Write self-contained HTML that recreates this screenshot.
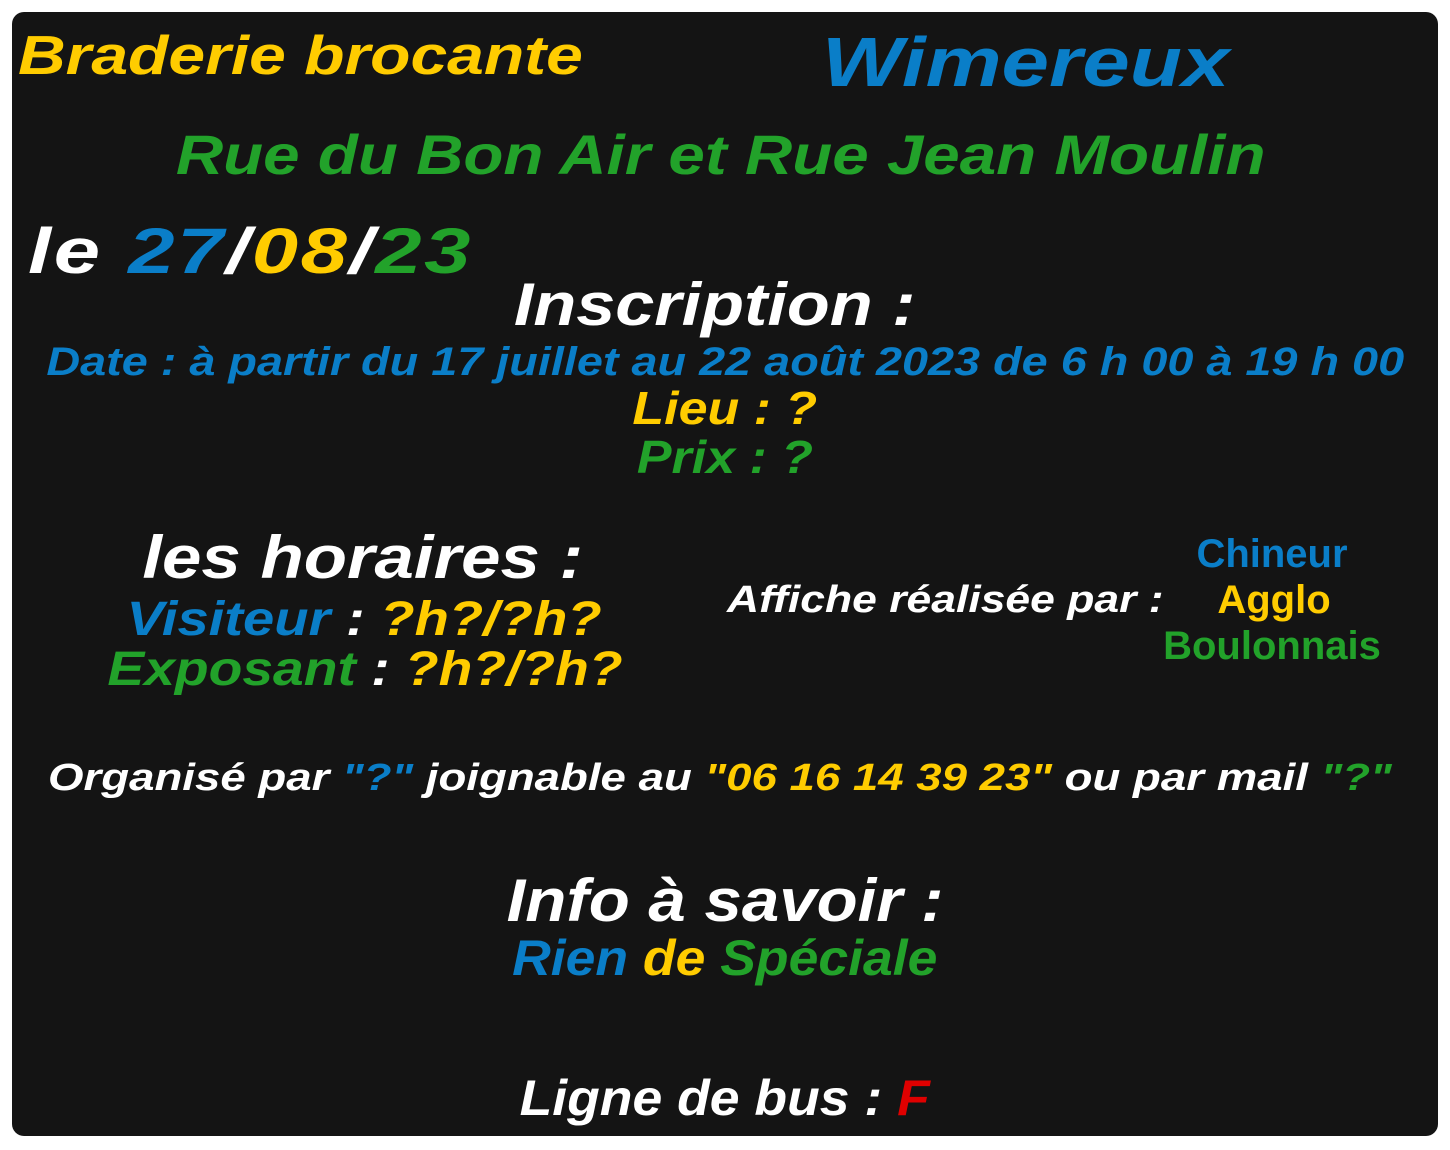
<!DOCTYPE html>
<html><head><meta charset="utf-8"><style>
html,body{margin:0;padding:0;background:#fff;width:1450px;height:1150px;overflow:hidden}
#b{position:absolute;left:12px;top:12px;width:1426px;height:1124px;background:#141414;border-radius:12px}
.t{position:absolute;white-space:nowrap;line-height:1;font-family:"Liberation Sans",sans-serif;font-weight:bold;font-style:italic;color:#fff}
.t>span.s{display:inline-block}
.c{left:0;width:1450px;text-align:center}
.y{color:#ffcc00}.bl{color:#0a7ec8}.g{color:#22a22a}.w{color:#fff}.r{color:#e00000}
.n{font-style:normal}
</style></head><body>
<div id="b"></div>
<div class="t y" style="left:18px;top:28px;font-size:55px"><span class="s" style="transform:scaleX(1.2);transform-origin:0 0">Braderie brocante</span></div>
<div class="t bl" style="left:822px;top:27px;font-size:70px"><span class="s" style="transform:scaleX(1.22);transform-origin:0 0">Wimereux</span></div>
<div class="t c g" style="top:127px;font-size:56px;left:-4px"><span class="s" style="transform:scaleX(1.17)">Rue du Bon Air et Rue Jean Moulin</span></div>
<div class="t" style="left:28px;top:219px;font-size:64px"><span class="s" style="transform:scaleX(1.3);transform-origin:0 0;letter-spacing:2px">le <span class="bl">27</span>/<span class="y">08</span>/<span class="g">23</span></span></div>
<div class="t c" style="top:275px;font-size:60px;left:-10px"><span class="s" style="transform:scaleX(1.17)">Inscription :</span></div>
<div class="t c bl" style="top:342px;font-size:40px;left:0"><span class="s" style="transform:scaleX(1.17)">Date : à partir du 17 juillet au 22 août 2023 de 6 h 00 à 19 h 00</span></div>
<div class="t c y" style="top:385px;font-size:46px"><span class="s" style="transform:scaleX(1.13)">Lieu : ?</span></div>
<div class="t c g" style="top:434px;font-size:46px"><span class="s" style="transform:scaleX(1.13)">Prix : ?</span></div>
<div class="t" style="left:0;width:725px;text-align:center;top:528px;font-size:60px"><span class="s" style="transform:scaleX(1.18)">les horaires :</span></div>
<div class="t" style="left:0;width:728px;text-align:center;top:596px;font-size:48px"><span class="s" style="transform:scaleX(1.17)"><span class="bl">Visiteur</span> : <span class="y">?h?/?h?</span></span></div>
<div class="t" style="left:0;width:730px;text-align:center;top:646px;font-size:48px"><span class="s" style="transform:scaleX(1.15)"><span class="g">Exposant</span> : <span class="y">?h?/?h?</span></span></div>
<div class="t" style="left:727px;top:581px;font-size:38px"><span class="s" style="transform:scaleX(1.17);transform-origin:0 0">Affiche réalisée par :</span></div>
<div class="t n bl" style="left:1122px;width:300px;text-align:center;top:534px;font-size:40px">Chineur</div>
<div class="t n y" style="left:1124px;width:300px;text-align:center;top:580px;font-size:40px">Agglo</div>
<div class="t n g" style="left:1122px;width:300px;text-align:center;top:626px;font-size:40px">Boulonnais</div>
<div class="t c" style="top:759px;font-size:38px;left:-5px"><span class="s" style="transform:scaleX(1.2)">Organisé par <span class="bl">"?"</span> joignable au <span class="y">"06 16 14 39 23"</span> ou par mail <span class="g">"?"</span></span></div>
<div class="t c" style="top:871px;font-size:60px"><span class="s" style="transform:scaleX(1.12)">Info à savoir :</span></div>
<div class="t c" style="top:933px;font-size:50px"><span class="s" style="transform:scaleX(1.07)"><span class="bl">Rien</span> <span class="y">de</span> <span class="g">Spéciale</span></span></div>
<div class="t c" style="top:1073px;font-size:50px"><span class="s" style="transform:scaleX(1.07)">Ligne de bus : <span class="r">F</span></span></div>
</body></html>
